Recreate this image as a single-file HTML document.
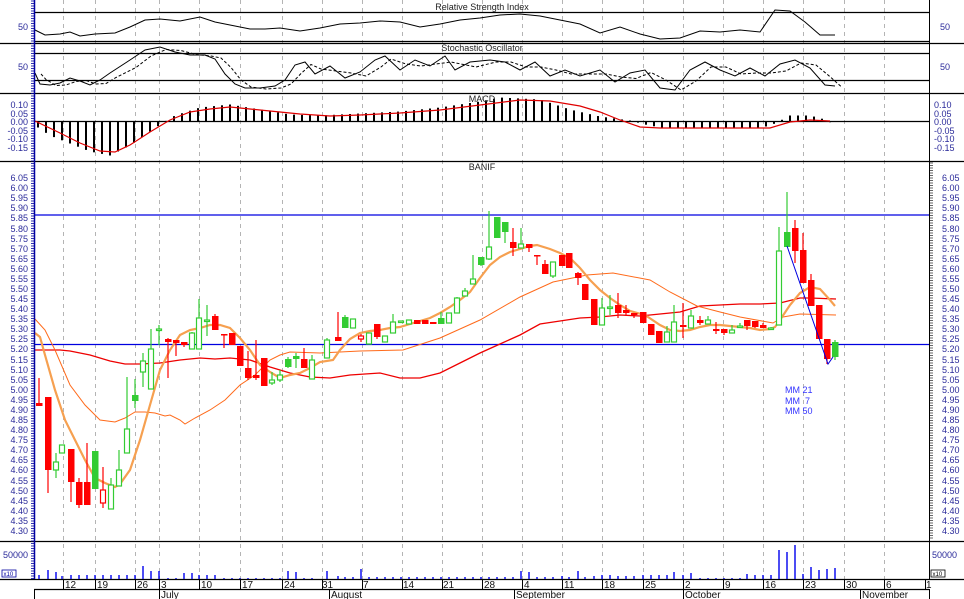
<!DOCTYPE html>
<html><head><meta charset="utf-8"><style>
html,body{margin:0;padding:0;background:#fff;width:964px;height:599px;overflow:hidden}
svg{display:block;font-family:"Liberation Sans",Arial,sans-serif}
.l{font-size:9px;fill:#2a2a9a}
.r{font-size:9px;fill:#2a2a9a}
.t{font-size:9px;fill:#222}
.d{font-size:10px;fill:#111}
</style></head><body>
<svg id="s" width="964" height="599" viewBox="0 0 964 599" xmlns="http://www.w3.org/2000/svg">
<rect width="964" height="599" fill="#fff"/>
<g id="grid"></g>
<g id="bg"></g>
<g stroke="#000" stroke-width="1.2">
<line x1="34" y1="12.5" x2="929" y2="12.5"/>
<line x1="34" y1="41.5" x2="929" y2="41.5"/>
<line x1="0" y1="43.5" x2="964" y2="43.5"/>
<line x1="34" y1="53.5" x2="929" y2="53.5"/>
<line x1="34" y1="80.5" x2="929" y2="80.5"/>
<line x1="0" y1="93.5" x2="964" y2="93.5"/>
<line x1="34" y1="121.5" x2="929" y2="121.5"/>
<line x1="0" y1="161.5" x2="964" y2="161.5"/>
<line x1="0" y1="541.5" x2="964" y2="541.5"/>
<line x1="0" y1="579.5" x2="964" y2="579.5"/>
<line x1="34" y1="589.5" x2="929" y2="589.5"/>
</g>
<line x1="34" y1="215" x2="929" y2="215" stroke="#0000e0" stroke-width="1.3"/>
<line x1="34" y1="344.5" x2="929" y2="344.5" stroke="#0000e0" stroke-width="1.3"/>
<g id="fg"></g>
<polyline fill="none" stroke="#0000e0" stroke-width="1" points="787,246 828,364 833,357"/>
<line x1="34.5" y1="0" x2="34.5" y2="579" stroke="#0000a0" stroke-width="1.5"/>
<line x1="929.5" y1="0" x2="929.5" y2="579" stroke="#000" stroke-width="1"/>
<g id="ticks"></g>
<text class="t" x="482" y="10" text-anchor="middle">Relative Strength Index</text>
<text class="t" x="482" y="51" text-anchor="middle">Stochastic Oscillator</text>
<text class="t" x="482" y="102" text-anchor="middle">MACD</text>
<text class="t" x="482" y="170" text-anchor="middle">BANIF</text>
<g class="l" text-anchor="end">
<text x="28" y="30">50</text><text x="28" y="70">50</text>
<text x="28" y="108">0.10</text><text x="28" y="117">0.05</text><text x="28" y="125">0.00</text><text x="28" y="134">-0.05</text><text x="28" y="142">-0.10</text><text x="28" y="151">-0.15</text>
<text x="28" y="558">50000</text>
</g>
<g class="r">
<text x="940" y="30">50</text><text x="940" y="70">50</text>
<text x="934" y="108">0.10</text><text x="934" y="117">0.05</text><text x="934" y="125">0.00</text><text x="934" y="134">-0.05</text><text x="934" y="142">-0.10</text><text x="934" y="151">-0.15</text>
<text x="932" y="558">50000</text>
</g>
<g class="l" text-anchor="end" id="pl">
<text x="28" y="181">6.05</text><text x="28" y="191">6.00</text><text x="28" y="201">5.95</text><text x="28" y="211">5.90</text><text x="28" y="221">5.85</text><text x="28" y="232">5.80</text><text x="28" y="242">5.75</text><text x="28" y="252">5.70</text><text x="28" y="262">5.65</text><text x="28" y="272">5.60</text><text x="28" y="282">5.55</text><text x="28" y="292">5.50</text><text x="28" y="302">5.45</text><text x="28" y="312">5.40</text><text x="28" y="322">5.35</text><text x="28" y="332">5.30</text><text x="28" y="342">5.25</text><text x="28" y="352">5.20</text><text x="28" y="363">5.15</text><text x="28" y="373">5.10</text><text x="28" y="383">5.05</text><text x="28" y="393">5.00</text><text x="28" y="403">4.95</text><text x="28" y="413">4.90</text><text x="28" y="423">4.85</text><text x="28" y="433">4.80</text><text x="28" y="443">4.75</text><text x="28" y="453">4.70</text><text x="28" y="463">4.65</text><text x="28" y="473">4.60</text><text x="28" y="484">4.55</text><text x="28" y="494">4.50</text><text x="28" y="504">4.45</text><text x="28" y="514">4.40</text><text x="28" y="524">4.35</text><text x="28" y="534">4.30</text>
</g>
<g class="r">
<text x="942" y="181">6.05</text><text x="942" y="191">6.00</text><text x="942" y="201">5.95</text><text x="942" y="211">5.90</text><text x="942" y="221">5.85</text><text x="942" y="232">5.80</text><text x="942" y="242">5.75</text><text x="942" y="252">5.70</text><text x="942" y="262">5.65</text><text x="942" y="272">5.60</text><text x="942" y="282">5.55</text><text x="942" y="292">5.50</text><text x="942" y="302">5.45</text><text x="942" y="312">5.40</text><text x="942" y="322">5.35</text><text x="942" y="332">5.30</text><text x="942" y="342">5.25</text><text x="942" y="352">5.20</text><text x="942" y="363">5.15</text><text x="942" y="373">5.10</text><text x="942" y="383">5.05</text><text x="942" y="393">5.00</text><text x="942" y="403">4.95</text><text x="942" y="413">4.90</text><text x="942" y="423">4.85</text><text x="942" y="433">4.80</text><text x="942" y="443">4.75</text><text x="942" y="453">4.70</text><text x="942" y="463">4.65</text><text x="942" y="473">4.60</text><text x="942" y="484">4.55</text><text x="942" y="494">4.50</text><text x="942" y="504">4.45</text><text x="942" y="514">4.40</text><text x="942" y="524">4.35</text><text x="942" y="534">4.30</text>
</g>
<g font-size="9" fill="#3333ff">
<text x="785" y="393">MM 21</text><text x="785" y="404">MM &#160;7</text><text x="785" y="414">MM 50</text>
</g>
<rect x="2" y="570" width="14" height="7" fill="#fff" stroke="#0000a0" stroke-width="0.8"/>
<text x="3.5" y="576" font-size="6" fill="#0000a0">x10</text>
<rect x="931" y="570" width="14" height="7" fill="#fff" stroke="#000" stroke-width="0.8"/>
<text x="932.5" y="576" font-size="6" fill="#000">x10</text>
<g class="d">
<text x="65" y="588">12</text><text x="97" y="588">19</text><text x="137" y="588">26</text><text x="161" y="588">3</text><text x="201" y="588">10</text><text x="242" y="588">17</text><text x="284" y="588">24</text><text x="322" y="588">31</text><text x="363" y="588">7</text><text x="403" y="588">14</text><text x="443" y="588">21</text><text x="484" y="588">28</text><text x="524" y="588">4</text><text x="564" y="588">11</text><text x="604" y="588">18</text><text x="645" y="588">25</text><text x="685" y="588">2</text><text x="725" y="588">9</text><text x="765" y="588">16</text><text x="805" y="588">23</text><text x="846" y="588">30</text><text x="886" y="588">6</text><text x="926" y="588">1</text>
<text x="161" y="598">July</text><text x="331" y="598">August</text><text x="516" y="598">September</text><text x="685" y="598">October</text><text x="862" y="598">November</text>
</g>
</svg>
<script>
var NS="http://www.w3.org/2000/svg";
function el(p,n,a){var e=document.createElementNS(NS,n);for(var k in a)e.setAttribute(k,a[k]);document.getElementById(p).appendChild(e);return e;}
var weeks=[63,95,135,159,199,240,282,322,362,402,442,482,522,562,602,643,683,723,763,803,844,884];
weeks.forEach(function(x){el('grid','line',{x1:x+.5,y1:0,x2:x+.5,y2:579,stroke:'#b4b4b4','stroke-dasharray':'4,4'});
 el('ticks','line',{x1:x+.5,y1:579,x2:x+.5,y2:590,stroke:'#000'});});
[34,159,329,514,683,860,929].forEach(function(x){el('ticks','line',{x1:x+.5,y1:589,x2:x+.5,y2:599,stroke:'#000'});});
el('ticks','line',{x1:925.5,y1:579,x2:925.5,y2:590,stroke:'#000'});
for(var y=1;y<579;y+=2.5){el('ticks','line',{x1:31,y1:y,x2:34,y2:y,stroke:'#0000a0','stroke-width':.8});}
for(var y=163;y<540;y+=2.5){el('ticks','line',{x1:930,y1:y,x2:933,y2:y,stroke:'#000','stroke-width':.6});}
function pl(pts,c,w,dash){var a={points:pts,fill:'none',stroke:c,'stroke-width':w};if(dash)a['stroke-dasharray']=dash;el('fg','polyline',a);}
pl("35,30 45,35 60,34 70,32 80,36 95,34 115,33 130,27 145,20 160,19 180,21 200,17 215,22 230,25 250,29 265,29 280,28 300,31 320,28 340,24 360,23 380,21 400,22 420,27 440,24 460,20 480,18 500,15 520,14 540,16 560,20 580,24 600,33 620,27 640,34 660,39 680,38 700,31 720,32 740,30 760,32 775,10 790,11 805,22 820,35 835,35","#000",1);
var st=[[35,73],[40,84],[50,85],[60,83],[70,78],[80,81],[90,85],[100,80],[110,73],[130,60],[145,50],[160,47],[175,52],[190,55],[205,55],[215,59],[225,74],[235,84],[245,88],[260,88],[275,86],[285,80],[295,65],[305,62],[315,74],[330,66],[345,78],[360,72],[375,60],[385,56],[400,70],[415,60],[430,66],[445,56],[455,70],[470,62],[490,60],[505,62],[520,70],[535,62],[550,76],[565,70],[580,76],[600,70],[615,82],[630,73],[645,70],[660,88],[675,90],[690,70],[705,62],[720,70],[735,76],[750,68],[765,76],[780,64],[795,60],[810,68],[825,85],[835,86]];
pl(st.map(function(p){return p.join(',')}).join(' '),"#000",1);
pl(st.map(function(p,i){var q=st[Math.max(0,i-1)];return (p[0]+6)+','+((p[1]+q[1])/2+1)}).join(' '),"#000",1,"3,2");
var mk=[[38,6],[50,14],[70,22],[90,30],[110,34],[130,24],[150,10],[165,0],[175,-6],[200,-14],[230,-17],[260,-12],[290,-7],[320,-6],[360,-8],[400,-10],[440,-14],[480,-20],[500,-24],[540,-22],[570,-12],[600,-5],[630,-1],[645,3],[660,6],[700,7],[760,7],[775,2],[790,-6],[810,-6],[825,-2],[836,4]];
function interp(a,x){for(var i=1;i<a.length;i++){if(x<=a[i][0]){var t=(x-a[i-1][0])/(a[i][0]-a[i-1][0]);return a[i-1][1]+t*(a[i][1]-a[i-1][1]);}}return a[a.length-1][1];}
for(var x=38;x<=837;x+=8){var h=interp(mk,x);el('fg','line',{x1:x,y1:121.5,x2:x,y2:121.5+h,stroke:'#000','stroke-width':2});}
pl("35,121 60,133 80,143 100,151 115,152 130,145 150,132 170,120 190,112 210,109 230,107 250,109 270,111 300,114 330,116 360,115 400,113 440,110 480,105 520,100 550,101 580,106 600,112 620,120 640,127 660,128 700,128 770,128 790,122 810,120 830,121","#e00000",1.2);
pl("35,350 60,350 70,351 90,355 110,361 125,364 140,364 160,363 180,360 200,358 215,359 230,358 250,360 270,367 290,373 310,377 330,378 350,375 380,373 400,378 420,378 440,373 466,360 480,353 500,344 520,335 540,324 560,321 580,318 600,317 620,315 640,316 680,312 700,306 720,305 740,304 760,304 780,303 800,298 810,298 836,299","#ee0000",1.3);
pl("35,319 45,330 55,350 70,385 85,405 100,420 115,422 125,418 135,412 145,412 155,413 165,416 170,415 180,420 185,424 195,418 210,410 225,400 240,385 255,375 270,360 280,355 290,352 320,353 360,351 403,350 440,338 480,320 520,297 553,282 587,275 613,273 650,280 670,292 697,306 720,312 740,317 773,323 783,317 800,314 836,315","#ff6a1a",1);
pl("35,333 40,337 45,355 55,390 65,420 75,440 85,460 95,478 105,483 115,487 120,484 130,470 140,440 150,405 160,370 170,350 180,335 190,330 200,328 210,325 220,325 230,328 240,338 250,350 260,365 270,372 280,378 290,375 300,373 310,368 320,362 333,360 340,350 350,339 360,333 370,331 380,330 390,328 400,327 410,324 420,321 430,318 440,313 450,307 460,300 470,292 480,278 490,265 500,257 510,252 520,249 530,246 537,245 550,249 560,253 570,258 580,268 590,280 600,290 610,298 620,305 630,311 645,315 660,325 670,330 680,331 690,330 700,327 710,325 720,325 730,326 740,327 750,328 760,330 770,329 775,327 780,320 790,305 800,293 810,287 820,289 830,300 835,306","#f6a050",2.2);
var C=[[39,403,406,378,406,'r'],[48,397,470,397,493,'r'],[56,462,470,453,478,'h'],[62,445,453,445,453,'h'],[71,449,482,449,502,'r'],[79,482,505,478,508,'r'],[87,482,505,443,505,'r'],[95,451,489,451,489,'g'],[103,490,503,467,508,'rh'],[111,485,509,478,509,'h'],[119,470,486,450,486,'h'],[127,429,453,377,453,'h'],[135,395,401,379,408,'g'],[143,361,372,353,387,'h'],[151,349,389,329,389,'h'],[159,329,330,325,345,'h'],[168,339,342,338,378,'r'],[176,340,343,340,356,'r'],[184,342,345,342,347,'r'],[192,333,349,332,349,'h'],[199,318,349,299,349,'h'],[207,320,321,305,336,'h'],[215,316,330,314,330,'r'],[224,334,335,334,348,'r'],[232,333,345,333,345,'r'],[240,346,366,346,366,'r'],[248,368,378,351,380,'r'],[256,375,378,340,380,'r'],[264,358,386,358,386,'r'],[272,380,383,372,385,'h'],[280,375,380,370,382,'h'],[288,359,367,357,368,'g'],[296,356,359,353,368,'g'],[304,359,368,348,368,'r'],[312,360,379,355,379,'h'],[327,340,358,338,358,'h'],[338,337,341,312,341,'r'],[345,317,328,315,328,'g'],[353,319,328,319,328,'h'],[361,336,339,334,342,'rh'],[369,333,344,333,344,'h'],[377,324,337,324,339,'r'],[385,336,342,336,342,'h'],[393,322,333,314,333,'h'],[401,321,322,321,322,'h'],[409,320,324,320,324,'h'],[417,320,324,320,324,'r'],[425,320,324,320,324,'r'],[433,322,324,322,324,'r'],[441,318,324,312,324,'g'],[449,313,323,313,323,'h'],[457,298,313,297,313,'h'],[465,291,296,288,296,'h'],[473,279,284,255,284,'h'],[481,257,265,257,266,'g'],[489,247,259,211,260,'h'],[497,217,238,217,238,'g'],[505,222,232,222,243,'g'],[513,242,248,228,256,'r'],[521,244,248,228,248,'h'],[529,244,248,244,252,'r'],[537,255,256,255,265,'r'],[545,264,274,260,274,'r'],[553,262,276,262,278,'h'],[562,255,266,255,266,'r'],[569,253,268,253,268,'r'],[578,273,278,272,285,'r'],[585,284,300,284,300,'r'],[594,299,325,299,325,'r'],[602,308,325,298,325,'h'],[610,307,308,295,315,'h'],[618,305,313,293,318,'r'],[626,310,313,305,316,'r'],[634,313,315,313,318,'r'],[643,312,323,312,323,'r'],[651,324,335,324,335,'r'],[659,331,343,331,343,'r'],[667,332,342,326,342,'h'],[674,322,342,305,342,'h'],[683,325,327,303,338,'r'],[691,316,328,310,328,'h'],[700,320,323,316,325,'r'],[708,320,324,316,324,'h'],[716,329,331,322,334,'r'],[724,329,333,329,335,'r'],[732,330,333,325,333,'h'],[740,326,327,323,327,'h'],[747,320,326,320,330,'r'],[755,321,327,321,328,'r'],[763,325,328,323,328,'r'],[771,328,329,327,329,'h'],[779,251,325,227,325,'h'],[787,232,247,192,247,'g'],[795,228,251,220,263,'r'],[803,250,283,233,283,'r'],[811,280,306,274,306,'r'],[819,305,339,305,339,'r'],[827,339,359,339,364,'r'],[835,342,357,340,360,'g']];
var big=[[779,29],[787,27],[795,34],[803,5],[811,12],[819,9],[827,10],[835,11],[39,4],[48,9],[56,7],[143,13],[151,8],[159,8],[184,6],[192,6],[288,8],[296,7],[327,8],[361,10],[521,8],[529,7],[578,8],[674,7],[691,6],[747,5],[771,4],[602,4],[610,4]];
C.forEach(function(c){var x=c[0],h=1+((x*37)%4);big.forEach(function(b){if(Math.abs(b[0]-x)<=3)h=b[1];});
 el('fg','line',{x1:x,y1:579,x2:x,y2:579-h,stroke:'#0000ee','stroke-width':1.4});});
C.forEach(function(c){var x=c[0],t=c[5];var col=(t=='r'||t=='rh')?'#ff0000':'#33cc33';
 el('fg','line',{x1:x,y1:c[3],x2:x,y2:c[4],stroke:col,'stroke-width':1.2});
 var h=Math.max(1.5,c[2]-c[1]);
 if(t=='h'||t=='rh')el('fg','rect',{x:x-2.5,y:c[1],width:5,height:h,fill:'#fff',stroke:col,'stroke-width':1.2});
 else el('fg','rect',{x:x-3,y:c[1],width:6.5,height:h,fill:col});});
</script>
</body></html>
